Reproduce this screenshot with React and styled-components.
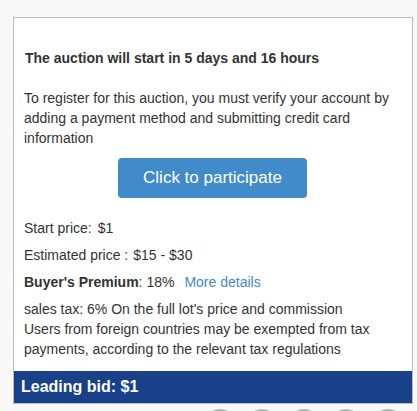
import React from 'react';
import styled, { createGlobalStyle } from 'styled-components';

const COLORS = {
  page: '#f8f8f8',
  border: '#bbbbbb',
  text: '#333333',
  primary: '#428bca',
  bar: '#19418a',
};

const GlobalStyle = createGlobalStyle`
  html, body {
    margin: 0;
    padding: 0;
    background: ${COLORS.page};
    font-family: "Liberation Sans", Arial, sans-serif;
    color: ${COLORS.text};
  }
`;

const ROWS = [
  { label: 'Start price:', value: '$1', gap: 6 },
  { label: 'Estimated price :', value: '$15 - $30', gap: 5 },
];

const App = () => {
  return (
    <>
      <GlobalStyle />
      <Page>
        <Card>
          <Body>
            <Heading>The auction will start in 5 days and 16 hours</Heading>
            <Notice>
              To register for this auction, you must verify your account by
              adding a payment method and submitting credit card information
            </Notice>
            <ButtonRow>
              <ParticipateButton>Click to participate</ParticipateButton>
            </ButtonRow>
            <Details>
              {ROWS.map((row) => (
                <DetailRow key={row.label}>
                  {row.label}
                  <Value $gap={row.gap}>{row.value}</Value>
                </DetailRow>
              ))}
              <DetailRow>
                <strong>Buyer's Premium</strong>: 18%
                <MoreLink href="#">More details</MoreLink>
              </DetailRow>
              <TaxNote>
                sales tax: 6% On the full lot's price and commission
                <br />
                Users from foreign countries may be exempted from tax
                payments, according to the relevant tax regulations
              </TaxNote>
            </Details>
          </Body>
          <LeadingBar>Leading bid: $1</LeadingBar>
        </Card>
        <ShareRow>
          {[0, 1, 2, 3, 4].map((i) => (
            <ShareDot key={i} />
          ))}
        </ShareRow>
      </Page>
    </>
  );
};

const Page = styled.div`
  padding: 17px 0 0 13px;
  width: 400px;
  height: 394px;
  overflow: hidden;
`;

const Card = styled.div`
  width: 398px;
  background: #fff;
  border: 1px solid ${COLORS.border};
`;

const Body = styled.div`
  padding: 30px 10px 12px 10px;
  font-size: 14px;
  line-height: 20px;
`;

const Heading = styled.h4`
  margin: 0 0 20px 1px;
  font-size: 14px;
  font-weight: bold;
  line-height: 20px;
`;

const Notice = styled.p`
  margin: 0;
`;

const ButtonRow = styled.div`
  display: flex;
  justify-content: center;
  padding-right: 1px;
  margin: 10px 0 20px;
`;

const ParticipateButton = styled.button`
  width: 189px;
  height: 40px;
  border: none;
  border-radius: 4px;
  background: ${COLORS.primary};
  color: #fff;
  font-family: inherit;
  font-size: 17px;
  cursor: pointer;
`;

const Details = styled.div`
  display: flex;
  flex-direction: column;
  gap: 7px;
`;

const DetailRow = styled.div`
  line-height: 20px;
`;

const Value = styled.span`
  margin-left: ${(p) => p.$gap}px;
`;

const MoreLink = styled.a`
  margin-left: 10px;
  color: ${COLORS.primary};
  text-decoration: none;
`;

const TaxNote = styled.div`
  line-height: 20px;
`;

const LeadingBar = styled.div`
  background: ${COLORS.bar};
  color: #fff;
  font-size: 16px;
  font-weight: bold;
  line-height: 20px;
  padding: 6px 7px;
  height: 20px;
`;

const ShareRow = styled.div`
  display: flex;
  gap: 10px;
  margin: 5px 0 0 191px;
`;

const ShareDot = styled.span`
  width: 32px;
  height: 32px;
  border-radius: 50%;
  background: #b5b5b5;
  flex: none;
`;

export default App;
